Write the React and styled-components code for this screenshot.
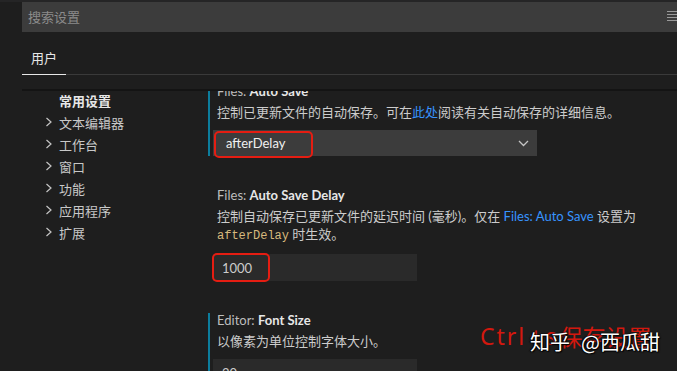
import React from "react";
import styled, { createGlobalStyle } from "styled-components";

const Global = createGlobalStyle`
  html, body { margin: 0; padding: 0; background: #1e1e1e; }
  body {
    width: 677px; height: 371px; overflow: hidden;
    font-family: Lato, "Noto Sans CJK SC", sans-serif;
  }
`;

const Page = styled.div`
  position: relative;
  width: 677px;
  height: 371px;
  overflow: hidden;
  box-sizing: border-box;
  background: #1e1e1e;
  border-top: 2px solid #252526;
  padding-left: 22px;
  display: flex;
  flex-direction: column;
`;

const Header = styled.div`
  position: relative;
  z-index: 2;
  flex: none;
  background: #1e1e1e;
  padding-bottom: 14px;
  box-shadow: 0 2px 0 #141414;
`;

const SearchBar = styled.div`
  height: 30px;
  background: #3c3c3c;
  display: flex;
  align-items: center;
  padding-left: 6px;
  color: #8b8b8b;
  font-size: 13px;
  line-height: 16px;
`;

const SearchIcon = styled.svg`
  margin-left: auto;
  flex: none;
`;

const TabBar = styled.div`
  height: 42px;
  display: flex;
  align-items: flex-end;
  border-bottom: 1px solid #3a3a3a;
`;

const Tab = styled.div`
  padding: 0 9px 8px;
  font-size: 13px;
  line-height: 16px;
  color: #e7e7e7;
  border-bottom: 1px solid #e7e7e7;
  margin-bottom: -1px;
`;

const Body = styled.div`
  flex: 1;
  display: flex;
  overflow: hidden;
`;

const Nav = styled.div`
  width: 186px;
  flex: none;
  box-sizing: border-box;
  padding-left: 23px;
  display: flex;
  flex-direction: column;
`;

const NavItem = styled.div`
  height: 22px;
  display: flex;
  align-items: center;
  font-size: 13px;
  color: ${(p) => (p.$active ? "#e7e7e7" : "#c8c8c8")};
  font-weight: ${(p) => (p.$active ? 700 : 400)};
`;

const Chevron = styled.span`
  width: 14px;
  flex: none;
  display: flex;
  align-items: center;
`;

const List = styled.div`
  flex: 1;
  margin-top: -5px;
  display: flex;
  flex-direction: column;
  gap: 32px;
`;

const Item = styled.div`
  border-left: 2px solid ${(p) => (p.$modified ? "#0c7d9d" : "transparent")};
  padding-left: 3px;
  display: flex;
  flex-direction: column;
`;

const Label = styled.div`
  padding-left: 4px;
  font-size: 13px;
  line-height: 14px;
  color: #bdbdbd;
  white-space: nowrap;
  b { color: #e7e7e7; font-weight: 700; }
`;

const Desc = styled.div`
  margin-top: 5px;
  padding-left: 4px;
  width: 428px;
  font-size: 13px;
  line-height: 18px;
  color: #cccccc;
`;

const Link = styled.span`
  color: #3794ff;
`;

const Code = styled.code`
  font-family: "Liberation Mono", monospace;
  font-size: 12px;
  color: #d7ba7d;
`;

const Control = styled.div`
  position: relative;
  margin-top: 9px;
  width: ${(p) => p.$w}px;
`;

const Select = styled.div`
  height: 26px;
  background: #3c3c3c;
  display: flex;
  align-items: center;
  padding: 0 8px 0 13px;
  font-size: 13px;
  color: #f0f0f0;
  svg { margin-left: auto; }
`;

const Input = styled.div`
  height: 27px;
  background: #2a2a2a;
  display: flex;
  align-items: center;
  padding-left: 9px;
  font-size: 13px;
  color: #cccccc;
`;

const Mark = styled.div`
  position: absolute;
  left: ${(p) => p.$x}px;
  top: ${(p) => p.$y}px;
  width: ${(p) => p.$w}px;
  height: ${(p) => p.$h}px;
  box-sizing: border-box;
  border: 2px solid #e51d12;
  border-radius: 5px;
`;

const Hint = styled.div`
  position: absolute;
  left: 480px;
  top: 318px;
  z-index: 3;
  color: #d3180e;
  font-size: 23px;
  line-height: 32px;
  white-space: nowrap;
  display: flex;
  gap: 3px;
`;

const HintLatin = styled.span`
  font-family: "Noto Sans", sans-serif;
  letter-spacing: ${(p) => p.$ls || 0}px;
`;

const HintCjk = styled.span`
  font-family: "Noto Sans CJK SC", sans-serif;
`;

const Watermark = styled.div`
  position: absolute;
  left: 530px;
  top: 326px;
  z-index: 4;
  display: flex;
  gap: 11px;
  font-family: "Noto Sans CJK SC", sans-serif;
  font-size: 20px;
  line-height: 28px;
  color: #ffffff;
  text-shadow: 1px 1px 1px #000, 0 0 2px #000, -1px 0 1px #000;
  white-space: nowrap;
`;

const ChevronRight = () => (
  <svg width="8" height="10" viewBox="0 0 8 10">
    <path d="M1.5 1 L6 5 L1.5 9" fill="none" stroke="#c5c5c5" strokeWidth="1.2" />
  </svg>
);

const navItems = ["文本编辑器", "工作台", "窗口", "功能", "应用程序", "扩展"];

export default function App() {
  return (
    <>
      <Global />
      <Page>
        <Header>
          <SearchBar>
            搜索设置
            <SearchIcon width="10" height="12" viewBox="0 0 10 12">
              <g stroke="#9a9a9a" strokeWidth="1">
                <line x1="0" y1="0.5" x2="10" y2="0.5" />
                <line x1="0" y1="3.5" x2="10" y2="3.5" />
                <line x1="0" y1="6.5" x2="10" y2="6.5" />
                <line x1="0" y1="9.5" x2="10" y2="9.5" />
              </g>
            </SearchIcon>
          </SearchBar>
          <TabBar>
            <Tab>用户</Tab>
          </TabBar>
        </Header>
        <Body>
          <Nav>
            <NavItem $active>
              <Chevron />
              常用设置
            </NavItem>
            {navItems.map((t) => (
              <NavItem key={t}>
                <Chevron>
                  <ChevronRight />
                </Chevron>
                {t}
              </NavItem>
            ))}
          </Nav>
          <List>
            <Item $modified>
              <Label>
                Files: <b>Auto Save</b>
              </Label>
              <Desc>
                控制已更新文件的自动保存。可在<Link>此处</Link>阅读有关自动保存的详细信息。
              </Desc>
              <Control $w={324}>
                <Select>
                  afterDelay
                  <svg width="11" height="7" viewBox="0 0 11 7">
                    <path d="M1 1 L5.5 5.5 L10 1" fill="none" stroke="#c5c5c5" strokeWidth="1.3" />
                  </svg>
                </Select>
                <Mark $x={1} $y={1} $w={99} $h={27} />
              </Control>
            </Item>
            <Item>
              <Label>
                Files: <b>Auto Save Delay</b>
              </Label>
              <Desc>
                控制自动保存已更新文件的延迟时间 (毫秒)。仅在 <Link>Files: Auto Save</Link> 设置为{" "}
                <Code>afterDelay</Code> 时生效。
              </Desc>
              <Control $w={204}>
                <Input>1000</Input>
                <Mark $x={-1} $y={-1} $w={58} $h={29} />
              </Control>
            </Item>
            <Item $modified>
              <Label>
                Editor: <b>Font Size</b>
              </Label>
              <Desc>以像素为单位控制字体大小。</Desc>
              <Control $w={204}>
                <Input>20</Input>
              </Control>
            </Item>
          </List>
        </Body>
        <Hint>
          <HintLatin $ls={2}>Ctrl</HintLatin>
          <HintLatin>+</HintLatin>
          <HintLatin>s</HintLatin>
          <HintCjk>保存设置</HintCjk>
        </Hint>
        <Watermark>
          <span>知乎</span>
          <span>@西瓜甜</span>
        </Watermark>
      </Page>
    </>
  );
}
